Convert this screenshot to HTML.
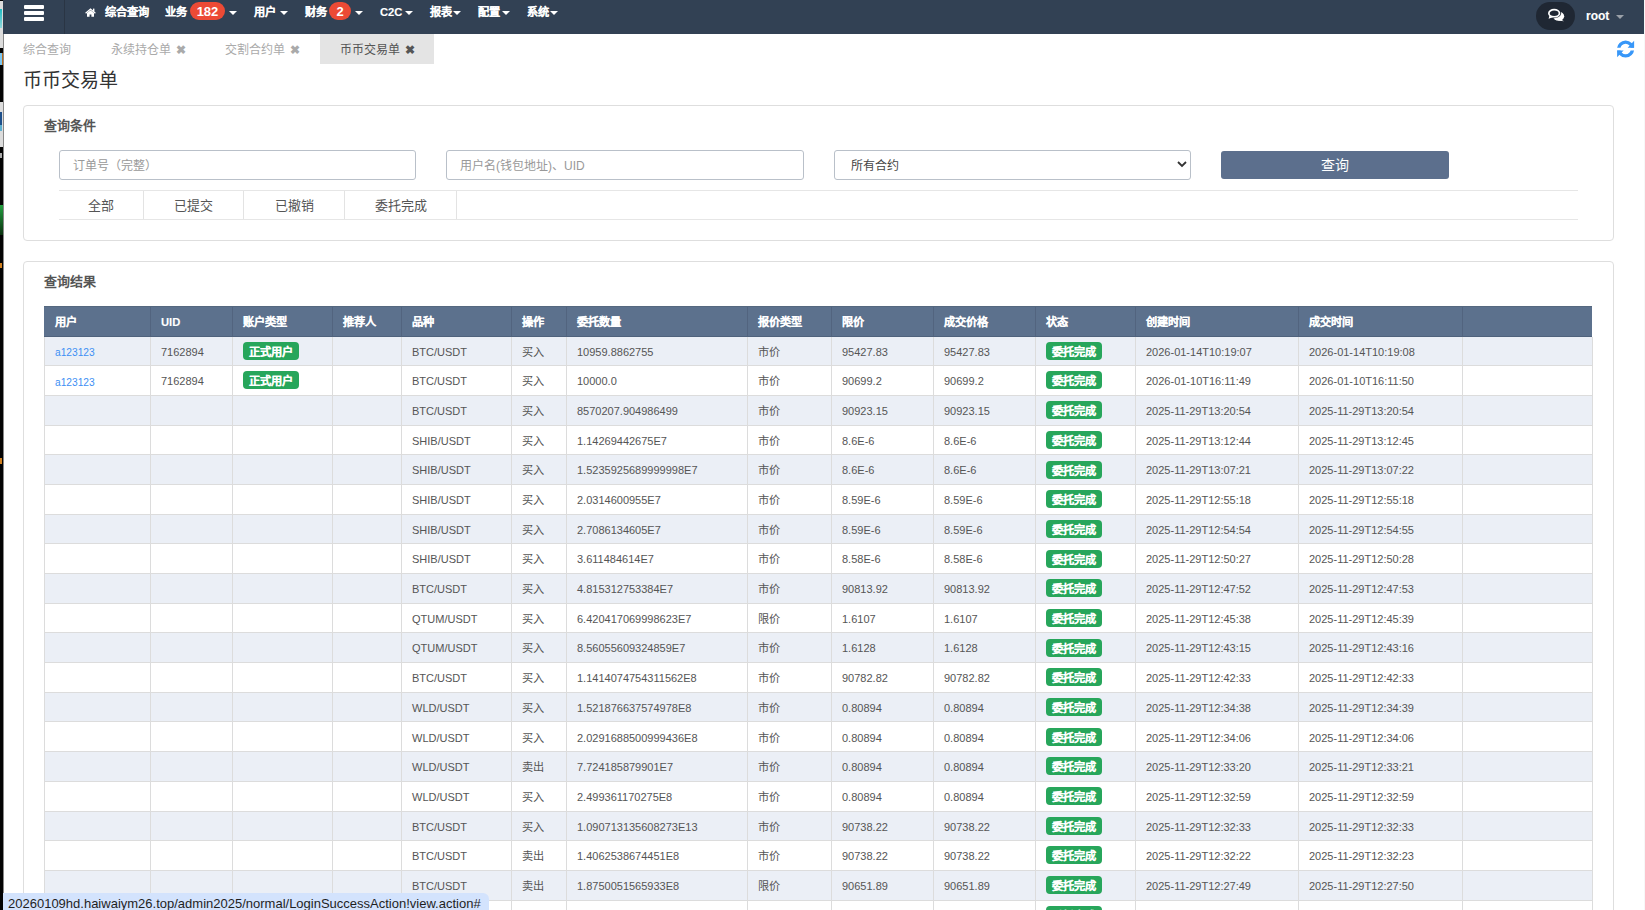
<!DOCTYPE html>
<html lang="zh-CN"><head><meta charset="utf-8">
<style>
*{margin:0;padding:0;box-sizing:border-box}
html,body{width:1645px;height:910px;overflow:hidden;background:#fff;font-family:"Liberation Sans",sans-serif;color:#555}
.a{position:absolute}
.nav{left:3px;top:0;width:1641px;height:34px;background:#324154}
.ni{position:absolute;top:0;height:25px;line-height:25px;color:#fff;font-weight:bold;font-size:11.2px;-webkit-text-stroke:0.1px #fff;white-space:nowrap}
.car{position:absolute;width:0;height:0;border-left:4px solid transparent;border-right:4px solid transparent;border-top:4px solid #fff}
.badge{position:absolute;top:2px;height:18px;border-radius:9px;background:#ec4a35;color:#fff;font-weight:bold;font-size:13px;line-height:20px;text-align:center}
.tab{position:absolute;top:35px;height:30px;line-height:31px;font-size:12px;color:#aaa;white-space:nowrap}
.x{font-size:12px;font-weight:bold;margin-left:2px}
.panel{position:absolute;left:23px;width:1591px;border:1px solid #dedede;border-radius:4px;background:#fff}
.ph{position:absolute;font-weight:bold;font-size:13px;color:#555;line-height:16px}
.inp{position:absolute;top:150px;height:30px;border:1px solid #b9c0c9;border-radius:3px;font-size:12px;color:#999;line-height:30px;padding-left:13px;white-space:nowrap}
.ftab{position:absolute;top:191px;height:28px;line-height:30px;font-size:13px;color:#555;text-align:center;border-right:1px solid #e3e3e3}
.row{position:absolute;left:44px;width:1548px}
.vl{position:absolute;width:1px;background:#dcdcdc}
.c{position:absolute;font-size:11px;color:#555;white-space:nowrap}
.cj{font-size:11.2px}
.lbl{position:absolute;height:18px;width:56px;border-radius:4px;background:#27a65b;color:#fff;font-weight:bold;font-size:11.2px;line-height:20.5px;text-align:center;-webkit-text-stroke:0.1px #fff}
.th{position:absolute;color:#fff;font-weight:bold;font-size:11.2px;-webkit-text-stroke:0.1px #fff;white-space:nowrap;top:314px;line-height:16px}
</style></head><body>

<div class="a" style="left:0;top:0;width:3px;height:910px;background:#030303"></div>
<div class="a" style="left:0;top:1px;width:2.6px;height:47px;background:#dcdcdc"></div>
<div class="a" style="left:0;top:9px;width:2px;height:19px;background:linear-gradient(#1fbcc4,#8fd6da)"></div>
<div class="a" style="left:0;top:53px;width:2px;height:12px;background:#7cc6f0"></div>
<div class="a" style="left:2px;top:53px;width:1px;height:12px;background:#b86a1a"></div>
<div class="a" style="left:0;top:102px;width:2.6px;height:45px;background:#dcdcdc"></div>
<div class="a" style="left:0;top:112px;width:2px;height:13px;background:#1d4f8a"></div>
<div class="a" style="left:0;top:125px;width:2px;height:6px;background:#5fb0d0"></div>
<div class="a" style="left:0;top:153px;width:2px;height:5px;background:#aaa"></div>
<div class="a" style="left:0;top:205px;width:2.5px;height:30px;background:linear-gradient(#23a040,#0a300f)"></div>
<div class="a" style="left:0;top:263px;width:2px;height:5px;background:#d08020"></div>
<div class="a" style="left:0;top:458px;width:2px;height:6px;background:#d08020"></div>
<div class="a" style="left:2.6px;top:0;width:0.4px;height:910px;background:#888"></div>
<div class="a nav"></div><div class="a" style="left:0;top:0">
<div class="a" style="left:24px;top:5px;width:19.5px;height:4px;border-radius:1px;background:#fff"></div>
<div class="a" style="left:24px;top:11px;width:19.5px;height:4px;border-radius:1px;background:#fff"></div>
<div class="a" style="left:24px;top:17px;width:19.5px;height:4px;border-radius:1px;background:#fff"></div>
<div class="a" style="left:64px;top:0;width:1px;height:34px;background:#2a3544"></div>
<svg class="a" style="left:85px;top:7.5px" width="11" height="9" viewBox="0 0 11 9"><path d="M0.6 5.2 L5.5 1 L10.4 5.2" fill="none" stroke="#fff" stroke-width="1.3"/><rect x="8" y="0.6" width="1.4" height="3" fill="#fff"/><path d="M2 5 L5.5 2.2 L9 5 L9 8.7 L6.4 8.7 L6.4 6.4 L4.6 6.4 L4.6 8.7 L2 8.7 Z" fill="#fff"/></svg>
<div class="ni" style="left:105px">综合查询</div>
<div class="ni" style="left:165px">业务</div>
<div class="badge" style="left:190px;width:35px">182</div>
<div class="car" style="left:229px;top:11px"></div>
<div class="ni" style="left:254px">用户</div>
<div class="car" style="left:280px;top:11px"></div>
<div class="ni" style="left:305px">财务</div>
<div class="badge" style="left:329px;width:22px">2</div>
<div class="car" style="left:355px;top:11px"></div>
<div class="ni" style="left:380px">C2C</div>
<div class="car" style="left:405px;top:11px"></div>
<div class="ni" style="left:430px">报表</div>
<div class="car" style="left:453px;top:11px"></div>
<div class="ni" style="left:478px">配置</div>
<div class="car" style="left:502px;top:11px"></div>
<div class="ni" style="left:527px">系统</div>
<div class="car" style="left:550px;top:11px"></div>
<div class="a" style="left:1536px;top:2px;width:39px;height:28px;border-radius:14px;background:#1f2733"></div>
<svg class="a" style="left:1546px;top:7px" width="20" height="16" viewBox="0 0 20 16"><ellipse cx="12.6" cy="9.3" rx="5.6" ry="4.5" fill="#fff"/><path d="M15 12.5 L18 14.3 L11.5 13.6 Z" fill="#fff"/><ellipse cx="8.15" cy="6.2" rx="6.9" ry="5.1" fill="#1f2733"/><ellipse cx="8.15" cy="6.2" rx="5.3" ry="3.55" fill="#1f2733" stroke="#fff" stroke-width="1.7"/><path d="M3.4 8.8 L2.6 11.8 L6.8 10.2 Z" fill="#fff"/></svg>
<div class="ni" style="left:1586px;font-size:12px;line-height:33px">root</div>
<div class="car" style="left:1616px;top:15px;border-top-color:#9aa0a8"></div>
</div>
<div class="a" style="left:1644px;top:0;width:1px;height:910px;background:#f7f7f7"></div>
<div class="tab" style="left:23px">综合查询</div>
<div class="tab" style="left:111px">永续持仓单 <span class="x">&#10006;</span></div>
<div class="tab" style="left:225px">交割合约单 <span class="x">&#10006;</span></div>
<div class="a" style="left:320px;top:34px;width:114px;height:30px;background:#e4e4e4"></div>
<div class="tab" style="left:340px;color:#555">币币交易单 <span class="x">&#10006;</span></div>
<svg class="a" style="left:1617px;top:39.5px" width="18" height="18" viewBox="0 0 18 18"><defs><clipPath id="ct"><rect x="-1" y="-1" width="20" height="8.7"/></clipPath><clipPath id="cb"><rect x="-1" y="10.4" width="20" height="9"/></clipPath></defs><circle cx="8.6" cy="9" r="6.9" fill="none" stroke="#3897f8" stroke-width="3.4" clip-path="url(#ct)"/><path d="M10.6 7.7 L17.1 7.7 L17.1 0.8 Z" fill="#3897f8"/><circle cx="8.6" cy="9" r="6.9" fill="none" stroke="#3897f8" stroke-width="3.4" clip-path="url(#cb)"/><path d="M6.6 10.4 L0.1 10.4 L0.1 17.2 Z" fill="#3897f8"/></svg>
<div class="a" style="left:23px;top:68px;font-size:19px;color:#333;line-height:26px">币币交易单</div>
<div class="panel" style="top:105px;height:136px"></div>
<div class="ph" style="left:44px;top:118px">查询条件</div>
<div class="inp" style="left:59px;width:357px">订单号（完整）</div>
<div class="inp" style="left:446px;width:358px">用户名(钱包地址)、UID</div>
<div class="inp" style="left:834px;width:357px;color:#444;padding-left:16px">所有合约</div>
<svg class="a" style="left:1177px;top:161px" width="10" height="7" viewBox="0 0 10 7"><path d="M1 1 L5 5 L9 1" fill="none" stroke="#333" stroke-width="1.8"/></svg>
<div class="a" style="left:1221px;top:151px;width:228px;height:28px;border-radius:3px;background:#5c6f8d;color:#fff;font-size:14px;font-weight:500;text-align:center;line-height:28px">查询</div>
<div class="a" style="left:59px;top:190px;width:1519px;height:1px;background:#e6e6e6"></div>
<div class="a" style="left:59px;top:219px;width:1519px;height:1px;background:#e6e6e6"></div>
<div class="ftab" style="left:59px;width:85px">全部</div>
<div class="ftab" style="left:144px;width:100px">已提交</div>
<div class="ftab" style="left:244px;width:101px">已撤销</div>
<div class="ftab" style="left:345px;width:112px">委托完成</div>
<div class="panel" style="top:261px;height:700px"></div>
<div class="ph" style="left:44px;top:274px">查询结果</div>
<div class="a" style="left:44px;top:306px;width:1548px;height:31px;background:#5c718d"></div>
<div class="th" style="left:55px">用户</div>
<div class="th" style="left:161px">UID</div>
<div class="th" style="left:243px">账户类型</div>
<div class="th" style="left:343px">推荐人</div>
<div class="th" style="left:412px">品种</div>
<div class="th" style="left:522px">操作</div>
<div class="th" style="left:577px">委托数量</div>
<div class="th" style="left:758px">报价类型</div>
<div class="th" style="left:842px">限价</div>
<div class="th" style="left:944px">成交价格</div>
<div class="th" style="left:1046px">状态</div>
<div class="th" style="left:1146px">创建时间</div>
<div class="th" style="left:1309px">成交时间</div>
<div class="a" style="left:150px;top:306px;width:1px;height:30px;background:#52647f"></div>
<div class="a" style="left:232px;top:306px;width:1px;height:30px;background:#52647f"></div>
<div class="a" style="left:332px;top:306px;width:1px;height:30px;background:#52647f"></div>
<div class="a" style="left:401px;top:306px;width:1px;height:30px;background:#52647f"></div>
<div class="a" style="left:511px;top:306px;width:1px;height:30px;background:#52647f"></div>
<div class="a" style="left:566px;top:306px;width:1px;height:30px;background:#52647f"></div>
<div class="a" style="left:747px;top:306px;width:1px;height:30px;background:#52647f"></div>
<div class="a" style="left:831px;top:306px;width:1px;height:30px;background:#52647f"></div>
<div class="a" style="left:933px;top:306px;width:1px;height:30px;background:#52647f"></div>
<div class="a" style="left:1035px;top:306px;width:1px;height:30px;background:#52647f"></div>
<div class="a" style="left:1135px;top:306px;width:1px;height:30px;background:#52647f"></div>
<div class="a" style="left:1298px;top:306px;width:1px;height:30px;background:#52647f"></div>
<div class="a" style="left:1462px;top:306px;width:1px;height:30px;background:#52647f"></div>
<div class="a" style="left:44px;top:306px;width:1548px;height:1px;background:#55687f"></div>
<div class="a" style="left:44px;top:336px;width:1548px;height:1px;background:#4f627c"></div>
<div class="a" style="left:44px;top:337px;width:1548px;height:29px;background:#ebeff6"></div>
<div class="a" style="left:44px;top:365px;width:1548px;height:1px;background:#dcdcdc"></div>
<div class="c" style="left:55px;top:344.9px;line-height:16px;color:#3d8ff4;font-size:10.2px">a123123</div>
<div class="c" style="left:161px;top:343.6px;line-height:16px;">7162894</div>
<div class="lbl" style="left:243px;top:341.7px">正式用户</div>
<div class="c" style="left:412px;top:343.6px;line-height:16px;">BTC/USDT</div>
<div class="c cj" style="left:522px;top:343.6px;line-height:16px;">买入</div>
<div class="c" style="left:577px;top:343.6px;line-height:16px;">10959.8862755</div>
<div class="c cj" style="left:758px;top:343.6px;line-height:16px;">市价</div>
<div class="c" style="left:842px;top:343.6px;line-height:16px;">95427.83</div>
<div class="c" style="left:944px;top:343.6px;line-height:16px;">95427.83</div>
<div class="lbl" style="left:1046px;top:341.7px">委托完成</div>
<div class="c" style="left:1146px;top:343.6px;line-height:16px;">2026-01-14T10:19:07</div>
<div class="c" style="left:1309px;top:343.6px;line-height:16px;">2026-01-14T10:19:08</div>
<div class="a" style="left:44px;top:366px;width:1548px;height:30px;background:#fff"></div>
<div class="a" style="left:44px;top:395px;width:1548px;height:1px;background:#dcdcdc"></div>
<div class="c" style="left:55px;top:374.6px;line-height:16px;color:#3d8ff4;font-size:10.2px">a123123</div>
<div class="c" style="left:161px;top:373.3px;line-height:16px;">7162894</div>
<div class="lbl" style="left:243px;top:371.4px">正式用户</div>
<div class="c" style="left:412px;top:373.3px;line-height:16px;">BTC/USDT</div>
<div class="c cj" style="left:522px;top:373.3px;line-height:16px;">买入</div>
<div class="c" style="left:577px;top:373.3px;line-height:16px;">10000.0</div>
<div class="c cj" style="left:758px;top:373.3px;line-height:16px;">市价</div>
<div class="c" style="left:842px;top:373.3px;line-height:16px;">90699.2</div>
<div class="c" style="left:944px;top:373.3px;line-height:16px;">90699.2</div>
<div class="lbl" style="left:1046px;top:371.4px">委托完成</div>
<div class="c" style="left:1146px;top:373.3px;line-height:16px;">2026-01-10T16:11:49</div>
<div class="c" style="left:1309px;top:373.3px;line-height:16px;">2026-01-10T16:11:50</div>
<div class="a" style="left:44px;top:396px;width:1548px;height:30px;background:#ebeff6"></div>
<div class="a" style="left:44px;top:425px;width:1548px;height:1px;background:#dcdcdc"></div>
<div class="c" style="left:412px;top:403.0px;line-height:16px;">BTC/USDT</div>
<div class="c cj" style="left:522px;top:403.0px;line-height:16px;">买入</div>
<div class="c" style="left:577px;top:403.0px;line-height:16px;">8570207.904986499</div>
<div class="c cj" style="left:758px;top:403.0px;line-height:16px;">市价</div>
<div class="c" style="left:842px;top:403.0px;line-height:16px;">90923.15</div>
<div class="c" style="left:944px;top:403.0px;line-height:16px;">90923.15</div>
<div class="lbl" style="left:1046px;top:401.1px">委托完成</div>
<div class="c" style="left:1146px;top:403.0px;line-height:16px;">2025-11-29T13:20:54</div>
<div class="c" style="left:1309px;top:403.0px;line-height:16px;">2025-11-29T13:20:54</div>
<div class="a" style="left:44px;top:426px;width:1548px;height:29px;background:#fff"></div>
<div class="a" style="left:44px;top:454px;width:1548px;height:1px;background:#dcdcdc"></div>
<div class="c" style="left:412px;top:432.7px;line-height:16px;">SHIB/USDT</div>
<div class="c cj" style="left:522px;top:432.7px;line-height:16px;">买入</div>
<div class="c" style="left:577px;top:432.7px;line-height:16px;">1.14269442675E7</div>
<div class="c cj" style="left:758px;top:432.7px;line-height:16px;">市价</div>
<div class="c" style="left:842px;top:432.7px;line-height:16px;">8.6E-6</div>
<div class="c" style="left:944px;top:432.7px;line-height:16px;">8.6E-6</div>
<div class="lbl" style="left:1046px;top:430.8px">委托完成</div>
<div class="c" style="left:1146px;top:432.7px;line-height:16px;">2025-11-29T13:12:44</div>
<div class="c" style="left:1309px;top:432.7px;line-height:16px;">2025-11-29T13:12:45</div>
<div class="a" style="left:44px;top:455px;width:1548px;height:30px;background:#ebeff6"></div>
<div class="a" style="left:44px;top:484px;width:1548px;height:1px;background:#dcdcdc"></div>
<div class="c" style="left:412px;top:462.4px;line-height:16px;">SHIB/USDT</div>
<div class="c cj" style="left:522px;top:462.4px;line-height:16px;">买入</div>
<div class="c" style="left:577px;top:462.4px;line-height:16px;">1.5235925689999998E7</div>
<div class="c cj" style="left:758px;top:462.4px;line-height:16px;">市价</div>
<div class="c" style="left:842px;top:462.4px;line-height:16px;">8.6E-6</div>
<div class="c" style="left:944px;top:462.4px;line-height:16px;">8.6E-6</div>
<div class="lbl" style="left:1046px;top:460.5px">委托完成</div>
<div class="c" style="left:1146px;top:462.4px;line-height:16px;">2025-11-29T13:07:21</div>
<div class="c" style="left:1309px;top:462.4px;line-height:16px;">2025-11-29T13:07:22</div>
<div class="a" style="left:44px;top:485px;width:1548px;height:30px;background:#fff"></div>
<div class="a" style="left:44px;top:514px;width:1548px;height:1px;background:#dcdcdc"></div>
<div class="c" style="left:412px;top:492.0px;line-height:16px;">SHIB/USDT</div>
<div class="c cj" style="left:522px;top:492.0px;line-height:16px;">买入</div>
<div class="c" style="left:577px;top:492.0px;line-height:16px;">2.0314600955E7</div>
<div class="c cj" style="left:758px;top:492.0px;line-height:16px;">市价</div>
<div class="c" style="left:842px;top:492.0px;line-height:16px;">8.59E-6</div>
<div class="c" style="left:944px;top:492.0px;line-height:16px;">8.59E-6</div>
<div class="lbl" style="left:1046px;top:490.1px">委托完成</div>
<div class="c" style="left:1146px;top:492.0px;line-height:16px;">2025-11-29T12:55:18</div>
<div class="c" style="left:1309px;top:492.0px;line-height:16px;">2025-11-29T12:55:18</div>
<div class="a" style="left:44px;top:515px;width:1548px;height:29px;background:#ebeff6"></div>
<div class="a" style="left:44px;top:543px;width:1548px;height:1px;background:#dcdcdc"></div>
<div class="c" style="left:412px;top:521.7px;line-height:16px;">SHIB/USDT</div>
<div class="c cj" style="left:522px;top:521.7px;line-height:16px;">买入</div>
<div class="c" style="left:577px;top:521.7px;line-height:16px;">2.7086134605E7</div>
<div class="c cj" style="left:758px;top:521.7px;line-height:16px;">市价</div>
<div class="c" style="left:842px;top:521.7px;line-height:16px;">8.59E-6</div>
<div class="c" style="left:944px;top:521.7px;line-height:16px;">8.59E-6</div>
<div class="lbl" style="left:1046px;top:519.8px">委托完成</div>
<div class="c" style="left:1146px;top:521.7px;line-height:16px;">2025-11-29T12:54:54</div>
<div class="c" style="left:1309px;top:521.7px;line-height:16px;">2025-11-29T12:54:55</div>
<div class="a" style="left:44px;top:544px;width:1548px;height:30px;background:#fff"></div>
<div class="a" style="left:44px;top:573px;width:1548px;height:1px;background:#dcdcdc"></div>
<div class="c" style="left:412px;top:551.4px;line-height:16px;">SHIB/USDT</div>
<div class="c cj" style="left:522px;top:551.4px;line-height:16px;">买入</div>
<div class="c" style="left:577px;top:551.4px;line-height:16px;">3.611484614E7</div>
<div class="c cj" style="left:758px;top:551.4px;line-height:16px;">市价</div>
<div class="c" style="left:842px;top:551.4px;line-height:16px;">8.58E-6</div>
<div class="c" style="left:944px;top:551.4px;line-height:16px;">8.58E-6</div>
<div class="lbl" style="left:1046px;top:549.5px">委托完成</div>
<div class="c" style="left:1146px;top:551.4px;line-height:16px;">2025-11-29T12:50:27</div>
<div class="c" style="left:1309px;top:551.4px;line-height:16px;">2025-11-29T12:50:28</div>
<div class="a" style="left:44px;top:574px;width:1548px;height:30px;background:#ebeff6"></div>
<div class="a" style="left:44px;top:603px;width:1548px;height:1px;background:#dcdcdc"></div>
<div class="c" style="left:412px;top:581.1px;line-height:16px;">BTC/USDT</div>
<div class="c cj" style="left:522px;top:581.1px;line-height:16px;">买入</div>
<div class="c" style="left:577px;top:581.1px;line-height:16px;">4.815312753384E7</div>
<div class="c cj" style="left:758px;top:581.1px;line-height:16px;">市价</div>
<div class="c" style="left:842px;top:581.1px;line-height:16px;">90813.92</div>
<div class="c" style="left:944px;top:581.1px;line-height:16px;">90813.92</div>
<div class="lbl" style="left:1046px;top:579.2px">委托完成</div>
<div class="c" style="left:1146px;top:581.1px;line-height:16px;">2025-11-29T12:47:52</div>
<div class="c" style="left:1309px;top:581.1px;line-height:16px;">2025-11-29T12:47:53</div>
<div class="a" style="left:44px;top:604px;width:1548px;height:29px;background:#fff"></div>
<div class="a" style="left:44px;top:632px;width:1548px;height:1px;background:#dcdcdc"></div>
<div class="c" style="left:412px;top:610.8px;line-height:16px;">QTUM/USDT</div>
<div class="c cj" style="left:522px;top:610.8px;line-height:16px;">买入</div>
<div class="c" style="left:577px;top:610.8px;line-height:16px;">6.420417069998623E7</div>
<div class="c cj" style="left:758px;top:610.8px;line-height:16px;">限价</div>
<div class="c" style="left:842px;top:610.8px;line-height:16px;">1.6107</div>
<div class="c" style="left:944px;top:610.8px;line-height:16px;">1.6107</div>
<div class="lbl" style="left:1046px;top:608.9px">委托完成</div>
<div class="c" style="left:1146px;top:610.8px;line-height:16px;">2025-11-29T12:45:38</div>
<div class="c" style="left:1309px;top:610.8px;line-height:16px;">2025-11-29T12:45:39</div>
<div class="a" style="left:44px;top:633px;width:1548px;height:30px;background:#ebeff6"></div>
<div class="a" style="left:44px;top:662px;width:1548px;height:1px;background:#dcdcdc"></div>
<div class="c" style="left:412px;top:640.4px;line-height:16px;">QTUM/USDT</div>
<div class="c cj" style="left:522px;top:640.4px;line-height:16px;">买入</div>
<div class="c" style="left:577px;top:640.4px;line-height:16px;">8.56055609324859E7</div>
<div class="c cj" style="left:758px;top:640.4px;line-height:16px;">市价</div>
<div class="c" style="left:842px;top:640.4px;line-height:16px;">1.6128</div>
<div class="c" style="left:944px;top:640.4px;line-height:16px;">1.6128</div>
<div class="lbl" style="left:1046px;top:638.5px">委托完成</div>
<div class="c" style="left:1146px;top:640.4px;line-height:16px;">2025-11-29T12:43:15</div>
<div class="c" style="left:1309px;top:640.4px;line-height:16px;">2025-11-29T12:43:16</div>
<div class="a" style="left:44px;top:663px;width:1548px;height:30px;background:#fff"></div>
<div class="a" style="left:44px;top:692px;width:1548px;height:1px;background:#dcdcdc"></div>
<div class="c" style="left:412px;top:670.1px;line-height:16px;">BTC/USDT</div>
<div class="c cj" style="left:522px;top:670.1px;line-height:16px;">买入</div>
<div class="c" style="left:577px;top:670.1px;line-height:16px;">1.1414074754311562E8</div>
<div class="c cj" style="left:758px;top:670.1px;line-height:16px;">市价</div>
<div class="c" style="left:842px;top:670.1px;line-height:16px;">90782.82</div>
<div class="c" style="left:944px;top:670.1px;line-height:16px;">90782.82</div>
<div class="lbl" style="left:1046px;top:668.2px">委托完成</div>
<div class="c" style="left:1146px;top:670.1px;line-height:16px;">2025-11-29T12:42:33</div>
<div class="c" style="left:1309px;top:670.1px;line-height:16px;">2025-11-29T12:42:33</div>
<div class="a" style="left:44px;top:693px;width:1548px;height:29px;background:#ebeff6"></div>
<div class="a" style="left:44px;top:721px;width:1548px;height:1px;background:#dcdcdc"></div>
<div class="c" style="left:412px;top:699.8px;line-height:16px;">WLD/USDT</div>
<div class="c cj" style="left:522px;top:699.8px;line-height:16px;">买入</div>
<div class="c" style="left:577px;top:699.8px;line-height:16px;">1.521876637574978E8</div>
<div class="c cj" style="left:758px;top:699.8px;line-height:16px;">市价</div>
<div class="c" style="left:842px;top:699.8px;line-height:16px;">0.80894</div>
<div class="c" style="left:944px;top:699.8px;line-height:16px;">0.80894</div>
<div class="lbl" style="left:1046px;top:697.9px">委托完成</div>
<div class="c" style="left:1146px;top:699.8px;line-height:16px;">2025-11-29T12:34:38</div>
<div class="c" style="left:1309px;top:699.8px;line-height:16px;">2025-11-29T12:34:39</div>
<div class="a" style="left:44px;top:722px;width:1548px;height:30px;background:#fff"></div>
<div class="a" style="left:44px;top:751px;width:1548px;height:1px;background:#dcdcdc"></div>
<div class="c" style="left:412px;top:729.5px;line-height:16px;">WLD/USDT</div>
<div class="c cj" style="left:522px;top:729.5px;line-height:16px;">买入</div>
<div class="c" style="left:577px;top:729.5px;line-height:16px;">2.0291688500999436E8</div>
<div class="c cj" style="left:758px;top:729.5px;line-height:16px;">市价</div>
<div class="c" style="left:842px;top:729.5px;line-height:16px;">0.80894</div>
<div class="c" style="left:944px;top:729.5px;line-height:16px;">0.80894</div>
<div class="lbl" style="left:1046px;top:727.6px">委托完成</div>
<div class="c" style="left:1146px;top:729.5px;line-height:16px;">2025-11-29T12:34:06</div>
<div class="c" style="left:1309px;top:729.5px;line-height:16px;">2025-11-29T12:34:06</div>
<div class="a" style="left:44px;top:752px;width:1548px;height:30px;background:#ebeff6"></div>
<div class="a" style="left:44px;top:781px;width:1548px;height:1px;background:#dcdcdc"></div>
<div class="c" style="left:412px;top:759.2px;line-height:16px;">WLD/USDT</div>
<div class="c cj" style="left:522px;top:759.2px;line-height:16px;">卖出</div>
<div class="c" style="left:577px;top:759.2px;line-height:16px;">7.724185879901E7</div>
<div class="c cj" style="left:758px;top:759.2px;line-height:16px;">市价</div>
<div class="c" style="left:842px;top:759.2px;line-height:16px;">0.80894</div>
<div class="c" style="left:944px;top:759.2px;line-height:16px;">0.80894</div>
<div class="lbl" style="left:1046px;top:757.3px">委托完成</div>
<div class="c" style="left:1146px;top:759.2px;line-height:16px;">2025-11-29T12:33:20</div>
<div class="c" style="left:1309px;top:759.2px;line-height:16px;">2025-11-29T12:33:21</div>
<div class="a" style="left:44px;top:782px;width:1548px;height:30px;background:#fff"></div>
<div class="a" style="left:44px;top:811px;width:1548px;height:1px;background:#dcdcdc"></div>
<div class="c" style="left:412px;top:788.8px;line-height:16px;">WLD/USDT</div>
<div class="c cj" style="left:522px;top:788.8px;line-height:16px;">买入</div>
<div class="c" style="left:577px;top:788.8px;line-height:16px;">2.499361170275E8</div>
<div class="c cj" style="left:758px;top:788.8px;line-height:16px;">市价</div>
<div class="c" style="left:842px;top:788.8px;line-height:16px;">0.80894</div>
<div class="c" style="left:944px;top:788.8px;line-height:16px;">0.80894</div>
<div class="lbl" style="left:1046px;top:786.9px">委托完成</div>
<div class="c" style="left:1146px;top:788.8px;line-height:16px;">2025-11-29T12:32:59</div>
<div class="c" style="left:1309px;top:788.8px;line-height:16px;">2025-11-29T12:32:59</div>
<div class="a" style="left:44px;top:812px;width:1548px;height:29px;background:#ebeff6"></div>
<div class="a" style="left:44px;top:840px;width:1548px;height:1px;background:#dcdcdc"></div>
<div class="c" style="left:412px;top:818.5px;line-height:16px;">BTC/USDT</div>
<div class="c cj" style="left:522px;top:818.5px;line-height:16px;">买入</div>
<div class="c" style="left:577px;top:818.5px;line-height:16px;">1.090713135608273E13</div>
<div class="c cj" style="left:758px;top:818.5px;line-height:16px;">市价</div>
<div class="c" style="left:842px;top:818.5px;line-height:16px;">90738.22</div>
<div class="c" style="left:944px;top:818.5px;line-height:16px;">90738.22</div>
<div class="lbl" style="left:1046px;top:816.6px">委托完成</div>
<div class="c" style="left:1146px;top:818.5px;line-height:16px;">2025-11-29T12:32:33</div>
<div class="c" style="left:1309px;top:818.5px;line-height:16px;">2025-11-29T12:32:33</div>
<div class="a" style="left:44px;top:841px;width:1548px;height:30px;background:#fff"></div>
<div class="a" style="left:44px;top:870px;width:1548px;height:1px;background:#dcdcdc"></div>
<div class="c" style="left:412px;top:848.2px;line-height:16px;">BTC/USDT</div>
<div class="c cj" style="left:522px;top:848.2px;line-height:16px;">卖出</div>
<div class="c" style="left:577px;top:848.2px;line-height:16px;">1.4062538674451E8</div>
<div class="c cj" style="left:758px;top:848.2px;line-height:16px;">市价</div>
<div class="c" style="left:842px;top:848.2px;line-height:16px;">90738.22</div>
<div class="c" style="left:944px;top:848.2px;line-height:16px;">90738.22</div>
<div class="lbl" style="left:1046px;top:846.3px">委托完成</div>
<div class="c" style="left:1146px;top:848.2px;line-height:16px;">2025-11-29T12:32:22</div>
<div class="c" style="left:1309px;top:848.2px;line-height:16px;">2025-11-29T12:32:23</div>
<div class="a" style="left:44px;top:871px;width:1548px;height:30px;background:#ebeff6"></div>
<div class="a" style="left:44px;top:900px;width:1548px;height:1px;background:#dcdcdc"></div>
<div class="c" style="left:412px;top:877.9px;line-height:16px;">BTC/USDT</div>
<div class="c cj" style="left:522px;top:877.9px;line-height:16px;">卖出</div>
<div class="c" style="left:577px;top:877.9px;line-height:16px;">1.8750051565933E8</div>
<div class="c cj" style="left:758px;top:877.9px;line-height:16px;">限价</div>
<div class="c" style="left:842px;top:877.9px;line-height:16px;">90651.89</div>
<div class="c" style="left:944px;top:877.9px;line-height:16px;">90651.89</div>
<div class="lbl" style="left:1046px;top:876.0px">委托完成</div>
<div class="c" style="left:1146px;top:877.9px;line-height:16px;">2025-11-29T12:27:49</div>
<div class="c" style="left:1309px;top:877.9px;line-height:16px;">2025-11-29T12:27:50</div>
<div class="a" style="left:44px;top:901px;width:1548px;height:30px;background:#fff"></div>
<div class="a" style="left:44px;top:930px;width:1548px;height:1px;background:#dcdcdc"></div>
<div class="lbl" style="left:1046px;top:905.7px">委托完成</div>
<div class="vl" style="left:44px;top:337px;height:600px"></div>
<div class="vl" style="left:150px;top:337px;height:600px"></div>
<div class="vl" style="left:232px;top:337px;height:600px"></div>
<div class="vl" style="left:332px;top:337px;height:600px"></div>
<div class="vl" style="left:401px;top:337px;height:600px"></div>
<div class="vl" style="left:511px;top:337px;height:600px"></div>
<div class="vl" style="left:566px;top:337px;height:600px"></div>
<div class="vl" style="left:747px;top:337px;height:600px"></div>
<div class="vl" style="left:831px;top:337px;height:600px"></div>
<div class="vl" style="left:933px;top:337px;height:600px"></div>
<div class="vl" style="left:1035px;top:337px;height:600px"></div>
<div class="vl" style="left:1135px;top:337px;height:600px"></div>
<div class="vl" style="left:1298px;top:337px;height:600px"></div>
<div class="vl" style="left:1462px;top:337px;height:600px"></div>
<div class="vl" style="left:1592px;top:337px;height:600px"></div>
<div class="a" style="left:3px;top:893px;width:486px;height:17px;background:#d3e3fd;border-top-right-radius:6px;font-size:13px;color:#1f1f1f;line-height:22px;padding-left:5px;white-space:nowrap">20260109hd.haiwaiym26.top/admin2025/normal/LoginSuccessAction!view.action#</div>
</body></html>
